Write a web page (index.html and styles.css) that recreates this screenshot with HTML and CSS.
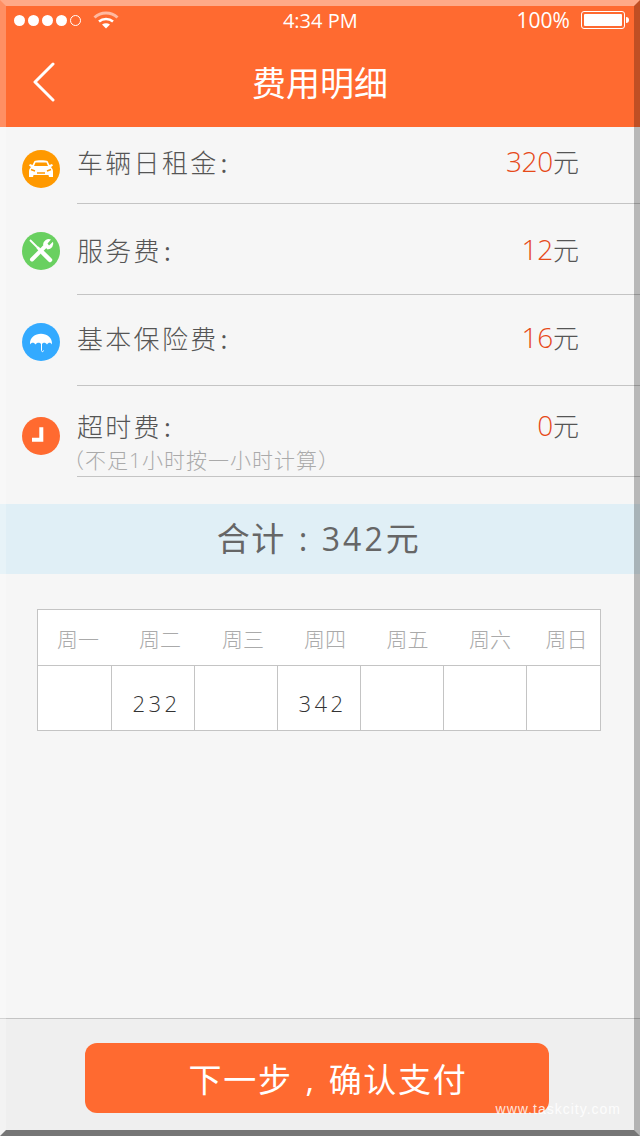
FILE: index.html
```html
<!DOCTYPE html>
<html lang="zh-CN">
<head>
    <meta charset="UTF-8">
    <title>费用明细</title>
    <link rel="stylesheet" href="styles.css">
</head>
<body>

<div id="phone">
    <header class="top">
        <div class="status">
            <div class="signal">
                <span class="dot"></span><span class="dot"></span><span class="dot"></span><span class="dot"></span><span class="dot dot-empty"></span>
                <svg class="wifi" width="26" height="20" viewBox="0 0 26 20">
                    <path d="M1.500 7.500C8 1.500 18 1.500 24.500 7.500" fill="none" stroke="#ffb9a0" stroke-width="3"/>
                    <path d="M6 11.500C10 8 16 8 20 11.500" fill="none" stroke="#fff" stroke-width="2.500"/>
                    <path d="M9 14.500C11.500 12.700 14.500 12.700 17 14.500L13 18.500Z" fill="#fff"/>
                </svg>
            </div>
            <div class="clock">4:34 PM</div>
            <div class="power">
                <span>100%</span>
                <span class="battery"><span class="battery-fill"></span></span>
                <span class="battery-nub"></span>
            </div>
        </div>
        <div class="nav">
            <svg class="back" width="24" height="40" viewBox="0 0 24 40">
                <path d="M21 2L3 20L21 38" fill="none" stroke="#fff" stroke-width="3" stroke-linecap="round" stroke-linejoin="round"/>
            </svg>
            <h1>费用明细</h1>
        </div>
    </header>

    <section class="fees">
        <div class="row row-rent">
            <svg class="icon" width="38" height="38" viewBox="0 0 38 38">
                <circle cx="19" cy="19" r="19" fill="#ff9900"/>
                <path d="M12.500 11C14 10 24 10 25.500 11L27.500 15L30 14L31 15.500L29 17C30.500 18.500 31 20 31 21.500L31 27L27 27L26.500 25L11.500 25L11 27L7 27L7 21.500C7 20 7.500 18.500 9 17L7 15.500L8 14L10.500 15Z" fill="#fff"/>
                <path d="M13.500 12.500H24.500L26 16H12Z" fill="#ff9900"/>
                <path d="M9 19.500L13 21M29 19.500L25 21M15 23H23" stroke="#ff9900" stroke-width="1.500" fill="none"/>
            </svg>
            <div class="row-body">
                <span class="label">车辆日租金<span class="colon">:</span></span>
                <span class="price"><b>320</b>元</span>
            </div>
        </div>
        <div class="row row-service">
            <svg class="icon" width="38" height="38" viewBox="0 0 38 38">
                <circle cx="19" cy="19" r="19" fill="#69d060"/>
                <path d="M10 27.500L23 14.500" stroke="#fff" stroke-width="4" stroke-linecap="round"/>
                <path d="M21 12.500A5.800 5.800 0 0 1 29 7.500L25.500 11.500L27 13.500L31 9.800A5.800 5.800 0 0 1 25.500 17.500Z" fill="#fff"/>
                <path d="M8 8L16 16" stroke="#fff" stroke-width="1.800"/>
                <path d="M21 21L28 28" stroke="#fff" stroke-width="4.500" stroke-linecap="round"/>
                <path d="M14.500 16.500L16.500 14.500L21.500 19.500L19.500 21.500Z" fill="#fff"/>
            </svg>
            <div class="row-body">
                <span class="label">服务费<span class="colon">:</span></span>
                <span class="price"><b>12</b>元</span>
            </div>
        </div>
        <div class="row row-insurance">
            <svg class="icon" width="38" height="38" viewBox="0 0 38 38">
                <circle cx="19" cy="19" r="19" fill="#33aaff"/>
                <path d="M8 21.500C7 7 31 7 30 21.500C28.500 19 26.500 19 25 21.500C23.500 19 21 19 19.500 21.500C18 19 15 19 13.500 21.500C12 19 9.500 19 8 21.500Z" fill="#fff"/>
                <path d="M19.500 18V27.500C19.500 29 21.500 29 21.500 27.500" fill="none" stroke="#fff" stroke-width="1"/>
            </svg>
            <div class="row-body">
                <span class="label">基本保险费<span class="colon">:</span></span>
                <span class="price"><b>16</b>元</span>
            </div>
        </div>
        <div class="row row-overtime">
            <svg class="icon" width="38" height="38" viewBox="0 0 38 38">
                <circle cx="19" cy="19" r="19" fill="#ff6a30"/>
                <path d="M19.300 10.300V22.700H10" fill="none" stroke="#fff" stroke-width="4"/>
            </svg>
            <div class="row-body">
                <span class="label">超时费<span class="colon">:</span></span>
                <span class="price"><b>0</b>元</span>
                <span class="note">（不足1小时按一小时计算）</span>
            </div>
        </div>
    </section>

    <div class="total">合计<span class="wide-punct">:</span><span class="total-num">342</span>元</div>

    <section class="week">
        <div class="week-head">
            <span>周一</span><span>周二</span><span>周三</span><span>周四</span><span>周五</span><span>周六</span><span>周日</span>
        </div>
        <div class="week-body">
            <span></span><span>232</span><span></span><span>342</span><span></span><span></span><span></span>
        </div>
    </section>

    <footer class="bottom">
        <button class="pay" type="button">下一步<span class="wide-punct">,</span>确认支付</button>
    </footer>

    <div class="frame"></div>
    <div class="watermark">www.taskcity.com</div>
</div>

</body>
</html>
```

FILE: styles.css
```css
* {
    box-sizing: border-box;
}
html, body {
    margin: 0;
}
#phone {
    position: relative;
    width: 640px;
    height: 1136px;
    display: flex;
    flex-direction: column;
    background-color: #f6f6f6;
    color: #555;
    font-family: "Open Sans", "Noto Sans CJK SC", sans-serif;
    font-weight: 300;
    overflow: hidden;
}
.wide-punct {
    display: inline-block;
    width: 36px;
    text-align: center;
}

/* top bar */
.top {
    height: 127px;
    padding: 6px 6px 0 6px;
    background-color: #ff6a30;
    color: white;
}
.status {
    height: 28px;
    display: flex;
    align-items: center;
    justify-content: space-between;
    padding: 0 5px 0 8px;
    font-weight: 400;
}
.signal {
    display: flex;
    align-items: center;
    gap: 3px;
}
.dot {
    width: 11px;
    height: 11px;
    border-radius: 50%;
    background-color: white;
}
.dot-empty {
    background-color: transparent;
    border: 1px solid white;
}
.wifi {
    margin-left: 9px;
}
.clock {
    font-size: 20px;
    margin-left: 5px;
}
.power {
    display: flex;
    align-items: center;
    font-size: 21px;
}
.battery {
    width: 44px;
    height: 18px;
    margin-left: 11px;
    padding: 2px;
    border: 1px solid white;
    border-radius: 3px;
}
.battery-fill {
    display: block;
    height: 100%;
    background-color: white;
    border-radius: 1px;
}
.battery-nub {
    width: 3px;
    height: 6px;
    margin-left: 1px;
    background-color: white;
    border-radius: 0 3px 3px 0;
}
.nav {
    height: 93px;
    display: flex;
    align-items: center;
    justify-content: center;
    position: relative;
}
.back {
    position: absolute;
    left: 26px;
    top: 28px;
}
.nav h1 {
    margin: 2px 0 0 0;
    font-size: 34px;
    font-weight: normal;
}

/* fee rows */
.row {
    display: flex;
    align-items: flex-start;
    padding-left: 22px;
    gap: 17px;
}
.row-rent { height: 77px; }
.row-service { height: 91px; }
.row-insurance { height: 91px; }
.row-overtime { height: 91px; }
.row-rent .icon { margin-top: 23px; }
.row-service .icon { margin-top: 28px; }
.row-insurance .icon { margin-top: 28px; }
.row-overtime .icon { margin-top: 31px; }
.row-body {
    flex: 1;
    height: 100%;
    display: flex;
    flex-wrap: wrap;
    justify-content: space-between;
    align-content: flex-start;
    padding-right: 61px;
    border-bottom: 1px solid #c4c4c4;
}
.row-rent .row-body { padding-top: 18px; }
.row-service .row-body { padding-top: 29px; }
.row-insurance .row-body { padding-top: 26px; }
.row-overtime .row-body { padding-top: 23px; }
.label {
    font-size: 26px;
    line-height: 36px;
    letter-spacing: 2.300px;
}
.colon {
    margin-left: 2px;
    font-weight: 400;
}
.price {
    font-size: 26px;
    line-height: 36px;
    margin-top: -2px;
}
.price b {
    font-weight: 300;
    font-size: 28px;
    letter-spacing: -0.300px;
    color: #e64a19;
}
.note {
    width: 100%;
    margin: 1px 0 0 -14px;
    font-size: 21px;
    line-height: 28px;
    letter-spacing: 1px;
    color: #aaa;
    white-space: nowrap;
}

/* total */
.total {
    margin-top: 27px;
    height: 70px;
    line-height: 70px;
    padding-right: 3px;
    text-align: center;
    background-color: #e0eff6;
    font-size: 33px;
    font-weight: 400;
    color: #666;
    letter-spacing: 1.500px;
}
.total-num {
    font-size: 32px;
    letter-spacing: 3px;
}

/* week table */
.week {
    margin: 35px 39px 0 37px;
    height: 122px;
    background-color: white;
    border: 1px solid #c4c4c4;
}
.week-head {
    height: 56px;
    display: grid;
    grid-template-columns: 80px 84px 82px 82px 83px 82px 69px;
    align-items: center;
    text-align: center;
    font-size: 21px;
    color: #aaa;
    border-bottom: 1px solid #c4c4c4;
}
.week-head span:last-child {
    padding-left: 2px;
}
.week-body {
    height: 64px;
    display: grid;
    grid-template-columns: 73px 83px 83px 83px 83px 83px 74px;
}
.week-body span {
    display: flex;
    align-items: center;
    justify-content: center;
    padding: 10px 0 0 7px;
    font-size: 22px;
    color: #333;
    letter-spacing: 3.500px;
    border-left: 1px solid #c4c4c4;
}
.week-body span:first-child {
    border-left: none;
}

/* bottom */
.bottom {
    margin-top: auto;
    height: 118px;
    padding: 24px 0 0 85px;
    background-color: #efefef;
    border-top: 1px solid #c4c4c4;
}
.pay {
    display: block;
    width: 464px;
    height: 70px;
    padding: 0 0 0 22px;
    border: none;
    border-radius: 12px;
    background-color: #ff6a30;
    color: white;
    font-family: inherit;
    font-weight: 400;
    font-size: 33px;
    letter-spacing: 1.700px;
}

/* outer bevel over the whole shot */
.frame {
    position: absolute;
    inset: 0;
    border-width: 6px;
    border-style: solid;
    border-color: rgba(255,255,255,.42) rgba(0,0,0,.25) rgba(0,0,0,.5) rgba(255,255,255,.25);
    pointer-events: none;
}
.watermark {
    position: absolute;
    right: 19px;
    bottom: 19px;
    font-family: "Liberation Sans", sans-serif;
    font-size: 14px;
    letter-spacing: 1px;
    color: rgba(255,255,255,.85);
}
```
